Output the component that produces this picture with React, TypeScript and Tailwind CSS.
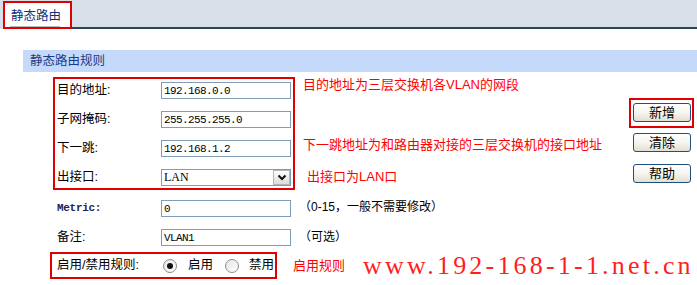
import React from "react";

const cjk = "font-['Liberation_Sans','Noto_Sans_CJK_SC',sans-serif]";

function Field({ value }: { value: string }) {
  return (
    <input
      readOnly
      value={value}
      className="w-[130px] h-[17px] border border-[#7f9db9] bg-white pl-[2px] font-['Liberation_Mono',monospace] text-[11px] leading-[15px] tracking-[-0.6px] text-black outline-none"
    />
  );
}

function Label({ children }: { children: React.ReactNode }) {
  return <div className="w-[104px] text-[12.5px] leading-[17px] text-black">{children}</div>;
}

function Btn({ text }: { text: string }) {
  return (
    <button className="w-[58px] h-[19px] rounded-[3px] border border-[#1f4f7c] bg-gradient-to-b from-white via-[#f6f5ef] to-[#e2dfd2] text-[13px] leading-[17px] text-black">
      {text}
    </button>
  );
}

function Radio({ checked }: { checked?: boolean }) {
  return (
    <span className="flex items-center justify-center w-[14px] h-[14px] rounded-full border border-[#8c8c8c] bg-gradient-to-br from-[#e6e6e6] to-white">
      {checked && <span className="w-[6px] h-[6px] rounded-full bg-[#111]" />}
    </span>
  );
}

export default function App() {
  return (
    <div className={`w-[697px] h-[285px] overflow-hidden bg-white ${cjk}`}>
      {/* top tab bar */}
      <div className="flex h-[29px] bg-[#d8dfe9]">
        <div className="w-[3px] h-[29px]" />
        <div className="mt-[1px] w-[69px] h-[28px] border-2 border-[#e00000] bg-white flex flex-col">
          <div className="pl-[6px] pt-[5px] text-[12.5px] leading-[16px] text-[#0f2f7c]">静态路由</div>
          <div className="mt-auto ml-[5px] w-[50px] h-[1px] bg-[#b8b8b8]" />
        </div>
        <div className="flex-1 h-[29px] border-b-2 border-[#294559]" />
      </div>

      {/* section title */}
      <div className="mt-[21px] ml-[23px] h-[22px] bg-[#c5d9fa] pl-[7px] text-[12.5px] leading-[22px] text-[#1b3a86]">
        静态路由规则
      </div>

      <div className="flex items-start mt-[5px]">
        {/* form */}
        <div className="ml-[53px] w-[242px]">
          <div className="border-2 border-[#e00000] pt-[3px] pb-[2px] pl-[2px] flex flex-col gap-[12px]">
            <div className="flex items-center h-[17px]">
              <Label>目的地址:</Label>
              <Field value="192.168.0.0" />
            </div>
            <div className="flex items-center h-[17px]">
              <Label>子网掩码:</Label>
              <Field value="255.255.255.0" />
            </div>
            <div className="flex items-center h-[17px]">
              <Label>下一跳:</Label>
              <Field value="192.168.1.2" />
            </div>
            <div className="flex items-center h-[17px]">
              <Label>出接口:</Label>
              <div className="flex w-[130px] h-[17px] border border-[#7f9db9] bg-white">
                <span className="flex-1 pl-[2px] font-['Liberation_Serif',serif] text-[12px] leading-[15px] text-black">LAN</span>
                <span className="flex items-center justify-center w-[17px] h-[15px] border border-[#b5b5b5] bg-gradient-to-b from-white to-[#dcdcdc]">
                  <svg width="10" height="7" viewBox="0 0 10 7">
                    <path d="M1.5 1.5 L5 5 L8.5 1.5" fill="none" stroke="#111" strokeWidth="2" />
                  </svg>
                </span>
              </div>
            </div>
          </div>

          <div className="flex items-center h-[17px] mt-[10px] pl-[4px]">
            <div className="w-[104px] font-['Liberation_Mono',monospace] text-[11px] font-bold leading-[17px] text-[#1c2450] tracking-[-0.3px]">Metric:</div>
            <Field value="0" />
          </div>
          <div className="flex items-center h-[17px] mt-[12px] pl-[4px]">
            <Label>备注:</Label>
            <Field value="VLAN1" />
          </div>
        </div>

        {/* notes */}
        <div className="ml-[8px] flex flex-col">
          <div className="mt-[-1px] h-[17px] text-[13px] leading-[17px] text-[#ff0000] whitespace-nowrap">目的地址为三层交换机各VLAN的网段</div>
          <div className="mt-[43px] h-[17px] text-[13px] leading-[17px] text-[#ff0000] whitespace-nowrap">下一跳地址为和路由器对接的三层交换机的接口地址</div>
          <div className="mt-[15px] ml-[4px] h-[17px] text-[13px] leading-[17px] text-[#ff0000] whitespace-nowrap">出接口为LAN口</div>
          <div className="mt-[14px] ml-[-4px] h-[17px] text-[12px] leading-[17px] text-black whitespace-nowrap">（0-15，一般不需要修改）</div>
          <div className="mt-[13px] ml-[-4px] h-[17px] text-[12px] leading-[17px] text-black whitespace-nowrap">（可选）</div>
        </div>

        {/* buttons */}
        <div className="ml-auto mr-[3px] mt-[21px] flex flex-col">
          <div className="border-2 border-[#e00000] pl-[2px] pr-[1px] pb-[2px]">
            <Btn text="新增" />
          </div>
          <div className="mt-[2px] ml-[4px]">
            <Btn text="清除" />
          </div>
          <div className="mt-[7px] ml-[4px]">
            <Btn text="帮助" />
          </div>
        </div>
      </div>

      {/* enable row */}
      <div className="flex items-center mt-[6px]">
        <div className="ml-[50px] w-[227px] h-[27px] border-2 border-[#e00000] flex items-center pl-[5px]">
          <div className="w-[106px] text-[12.5px] leading-[17px] text-black">启用/禁用规则:</div>
          <Radio checked />
          <span className="ml-[11px] text-[12.5px] leading-[17px] text-black">启用</span>
          <span className="ml-[12px]"><Radio /></span>
          <span className="ml-[10px] text-[12.5px] leading-[17px] text-black">禁用</span>
        </div>
        <div className="ml-[16px] w-[70px] text-[13px] leading-[17px] text-[#ff0000]">启用规则</div>
        <div className="font-['Liberation_Serif',serif] text-[26px] leading-[26px] tracking-[3.2px] text-[#ff1e1e] whitespace-nowrap">
          www.192-168-1-1.net.cn
        </div>
      </div>
    </div>
  );
}
